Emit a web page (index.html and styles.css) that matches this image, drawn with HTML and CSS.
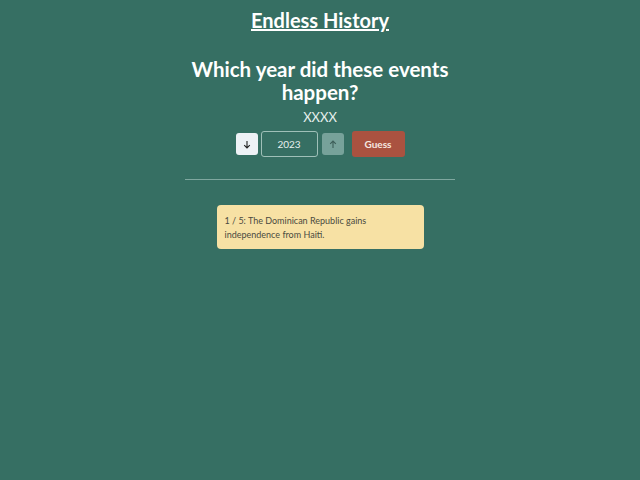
FILE: index.html
```html
<!DOCTYPE html>
<html lang="en">
  <head>
    <meta charset="UTF-8" />
    <meta name="viewport" content="width=device-width, initial-scale=1.0" />
    <title>Endless History</title>
    <link rel="stylesheet" href="styles.css">
  </head>
  <body>
    <div class="container">
      <h1 class="title"><a href="#">Endless History</a></h1>
      <h2 class="question">Which year did these events happen?</h2>
      <div class="answer">XXXX</div>
      <form class="guess-form">
        <button type="button" class="step step-down">
          <svg width="8" height="9" viewBox="0 0 8 9"><path d="M4 1v7M1.2 5.2L4 8l2.8-2.8" fill="none" stroke="#222" stroke-width="1.1"/></svg>
        </button>
        <input type="text" class="year" value="2023" />
        <button type="button" class="step step-up">
          <svg width="8" height="9" viewBox="0 0 8 9"><path d="M4 8V1M1.2 3.8L4 1l2.8 2.8" fill="none" stroke="#3d5e58" stroke-width="1.1"/></svg>
        </button>
        <button type="submit" class="guess">Guess</button>
      </form>
      <hr class="divider" />
      <div class="events">
        <div class="event">1 / 5: The Dominican Republic gains independence from Haiti.</div>
      </div>
    </div>
  </body>
</html>
```

FILE: styles.css
```css
body {
  margin: 0;
  background-color: #366f63;
  color: #fff;
  font-family: Lato, "Open Sans", sans-serif;
}

.container {
  display: flex;
  flex-direction: column;
  align-items: center;
}

.title {
  margin: 7px 0 0;
  font-size: 20px;
  line-height: 26px;
}

.title a {
  color: #fff;
}

.question {
  margin: 25px 0 0;
  width: 290px;
  text-align: center;
  font-size: 20.5px;
  line-height: 23px;
}

.answer {
  margin-top: 5px;
  font-size: 13px;
  line-height: 16px;
  color: #e6efed;
}

.guess-form {
  display: flex;
  align-items: center;
  margin-top: 6px;
}

.step {
  width: 22px;
  height: 22px;
  padding: 0;
  border: none;
  border-radius: 3px;
  display: flex;
  align-items: center;
  justify-content: center;
}

.step-down {
  background-color: #eef2f6;
}

.step-up {
  background-color: #77a29a;
  margin-left: 4px;
}

.year {
  width: 57px;
  height: 26px;
  margin-left: 3px;
  padding: 0;
  box-sizing: border-box;
  border: 1px solid #9fc0b8;
  border-radius: 3px;
  background-color: transparent;
  color: #e6efed;
  text-align: center;
  font-family: Lato, "Open Sans", sans-serif;
  font-size: 10px;
}

.guess {
  margin-left: 8px;
  width: 53px;
  height: 26px;
  border: none;
  border-radius: 3px;
  background-color: #aa5240;
  color: #f6e8e0;
  font-family: Lato, "Open Sans", sans-serif;
  font-size: 10px;
  font-weight: bold;
}

.divider {
  width: 270px;
  margin: 22px 0 0;
  border: none;
  border-top: 1px solid #7fa79f;
}

.events {
  margin-top: 25px;
}

.event {
  width: 207px;
  box-sizing: border-box;
  padding: 9px 8px 7px;
  border-radius: 4px;
  background-color: #f7e1a4;
  color: #4a4a40;
  font-size: 9px;
  line-height: 14px;
}
```
